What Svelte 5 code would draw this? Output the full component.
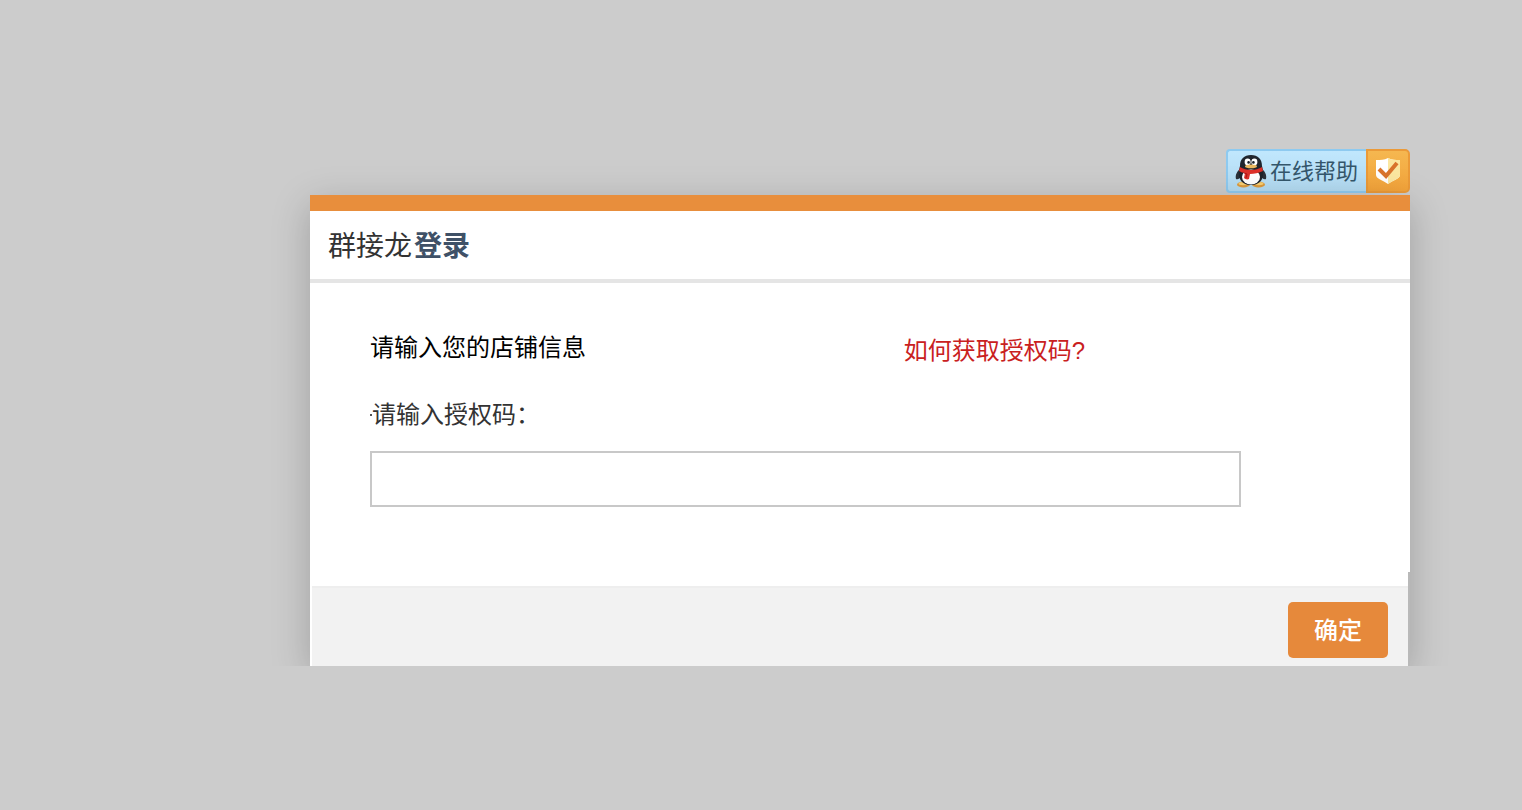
<script>
  let code = $state('');

  function submit(event) {
    event.preventDefault();
  }
</script>

<main class="page">
  <a class="help" href="#help">
    <span class="help-text">
      <svg width="32" height="34" viewBox="0 0 32 34" aria-hidden="true">
        <ellipse cx="8.5" cy="30.5" rx="6.5" ry="3" fill="#dc9a3c" />
        <ellipse cx="23.5" cy="30.5" rx="6.5" ry="3" fill="#dc9a3c" />
        <ellipse cx="8" cy="29.6" rx="4.5" ry="1.6" fill="#f8cf73" />
        <ellipse cx="24" cy="29.6" rx="4.5" ry="1.6" fill="#f8cf73" />
        <path d="M6 14C2 17 0 21 1 25c2 1 4-1 6-3zM26 14c4 3 6 7 5 11-2 1-4-1-6-3z" fill="#2b3038" />
        <path d="M16 1C9 1 5 5 5 12c-1 4-2 8 0 13 2 4 6 6 11 6s9-2 11-6c2-5 1-9 0-13C27 5 23 1 16 1z" fill="#20252d" />
        <ellipse cx="16" cy="23" rx="9" ry="7.5" fill="#fff" />
        <ellipse cx="12.6" cy="8" rx="3" ry="3.4" fill="#fff" />
        <ellipse cx="19.4" cy="8" rx="3" ry="3.4" fill="#fff" />
        <circle cx="13.6" cy="8.4" r="1.3" fill="#17202a" />
        <circle cx="18.4" cy="8.4" r="1.3" fill="#17202a" />
        <ellipse cx="16" cy="12.4" rx="6" ry="1.9" fill="#ecbb62" />
        <path d="M5 13c6 4 16 4 22 0l1 4c-4 2-9 3-13 3l-1 5c-2 1-4 0-5-1l1-5c-2 0-4-1-6-2z" fill="#dd3029" />
        <path d="M9 19l3 1-1 4" stroke="#ae1616" fill="none" />
      </svg>
      <span>在线帮助</span>
    </span>
    <span class="help-check">
      <svg width="26" height="28" viewBox="0 0 26 28" aria-hidden="true">
        <path d="M1 3c5 0 8 0 12-2 4 2 7 2 12 2v15c0 4-7 5-12 9-5-4-12-5-12-9z" fill="#fff" />
        <path d="M13 1c4 2 7 2 12 2v15c0 4-7 5-12 9z" fill="#fbe7a0" />
        <path d="M4 12l7 7L22 6" fill="none" stroke="#d9742c" stroke-width="4" />
      </svg>
    </span>
  </a>

  <form class="dialog" onsubmit={submit}>
    <header>
      <h1>群接龙<strong>登录</strong></h1>
    </header>

    <div class="body">
      <div class="intro">
        <h2>请输入您的店铺信息</h2>
        <a href="#code">如何获取授权码?</a>
      </div>
      <label for="code">请输入授权码：</label>
      <input id="code" type="text" autocomplete="off" bind:value={code} />
    </div>

    <footer>
      <div class="actions">
        <button type="submit">确定</button>
      </div>
    </footer>
  </form>
</main>

<style>
  :global(body) {
    background: #ccc;
    font-family: "Liberation Sans", "Noto Sans CJK SC", sans-serif;
  }

  .page {
    display: flex;
    flex-direction: column;
    padding: 149px 112px 0 310px;
  }

  .help {
    display: flex;
    align-self: flex-end;
    height: 44px;
    margin-bottom: 2px;
    font-size: 22px;
    color: #34566b;
    text-decoration: none;
  }

  .help-text,
  .help-check {
    display: flex;
    align-items: center;
    box-sizing: border-box;
  }

  .help-text {
    gap: 3px;
    padding: 0 8px 0 7px;
    border: 2px solid #8ecaf0;
    border-right: 0;
    border-radius: 4px 0 0 4px;
    background: linear-gradient(#c0e7fd, #b2daf1);
  }

  .help-text span {
    padding-bottom: 4px;
  }

  .help-check {
    justify-content: center;
    width: 44px;
    border: 2px solid #eb9a38;
    border-radius: 0 5px 5px 0;
    background: linear-gradient(#f5b750, #f3a33a);
  }

  .dialog {
    border-top: 16px solid #e88e3c;
    background: #fff;
    box-shadow: 0 10px 36px rgba(0, 0, 0, 0.22);
    /* the shadow stops at the lower edge of the dialog */
    clip-path: inset(-60px -60px 0 -60px);
  }

  header {
    padding: 3px 18px 0;
    border-bottom: 4px solid #e5e5e5;
  }

  h1 {
    display: flex;
    gap: 2px;
    margin: 0;
    font-size: 28px;
    font-weight: 400;
    line-height: 65px;
    color: #333;
  }

  strong {
    color: #3f5167;
  }

  .body {
    padding: 47px 169px 65px 60px;
  }

  .intro {
    display: flex;
    align-items: flex-end;
    justify-content: space-between;
    margin-bottom: 28px;
    padding-right: 156px;
    font-size: 24px;
    line-height: 36px;
  }

  h2 {
    margin: 0 0 3px;
    font-size: 24px;
    font-weight: 400;
    color: #000;
  }

  .intro a {
    color: #c9211e;
    text-decoration: none;
  }

  label {
    display: flex;
    align-items: center;
    margin-bottom: 18px;
    font-size: 24px;
    line-height: 36px;
    color: #333;
  }

  label::before {
    content: "";
    width: 2px;
    height: 2px;
    background: #555;
  }

  input {
    display: block;
    box-sizing: border-box;
    width: 100%;
    height: 56px;
    padding: 0 12px;
    border: 2px solid #c8c8c8;
    font: inherit;
    font-size: 24px;
    outline: none;
  }

  footer {
    padding: 14px 0 0 2px;
    border-right: 2px solid #b9b9b9;
  }

  .actions {
    display: flex;
    justify-content: flex-end;
    padding: 14px 20px 8px;
    border-top: 2px solid #eee;
    background: #f2f2f2;
  }

  button {
    width: 100px;
    height: 56px;
    padding: 0 0 4px;
    border: 0;
    border-radius: 5px;
    background: #e6893b;
    color: #fff;
    font: inherit;
    font-size: 24px;
    font-weight: 500;
    cursor: pointer;
  }
</style>
